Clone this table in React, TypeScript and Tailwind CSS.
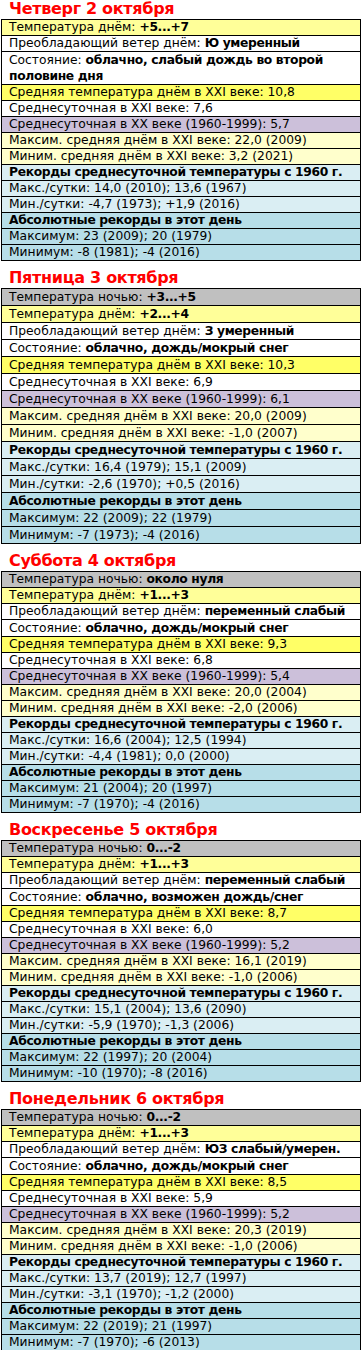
import React from "react";

type Day = {
  title: string;
  tall?: boolean;
  night?: string;
  day: string;
  wind: string;
  state: string;
  avg21: string;
  daily21: string;
  daily20: string;
  max: string;
  min: string;
  recMax: string;
  recMin: string;
  absMax: string;
  absMin: string;
};

const days: Day[] = [
  {
    title: "Четверг 2 октября",
    day: "+5...+7",
    wind: "Ю умеренный",
    state: "облачно, слабый дождь во второй половине дня",
    avg21: "10,8",
    daily21: "7,6",
    daily20: "5,7",
    max: "22,0 (2009)",
    min: "3,2 (2021)",
    recMax: "14,0 (2010); 13,6 (1967)",
    recMin: "-4,7 (1973); +1,9 (2016)",
    absMax: "23 (2009); 20 (1979)",
    absMin: "-8 (1981); -4 (2016)",
  },
  {
    title: "Пятница 3 октября",
    tall: true,
    night: "+3...+5",
    day: "+2...+4",
    wind: "З умеренный",
    state: "облачно, дождь/мокрый снег",
    avg21: "10,3",
    daily21: "6,9",
    daily20: "6,1",
    max: "20,0 (2009)",
    min: "-1,0 (2007)",
    recMax: "16,4 (1979); 15,1 (2009)",
    recMin: "-2,6 (1970); +0,5 (2016)",
    absMax: "22 (2009); 22 (1979)",
    absMin: "-7 (1973); -4 (2016)",
  },
  {
    title: "Суббота 4 октября",
    night: "около нуля",
    day: "+1...+3",
    wind: "переменный слабый",
    state: "облачно, дождь/мокрый снег",
    avg21: "9,3",
    daily21: "6,8",
    daily20: "5,4",
    max: "20,0 (2004)",
    min: "-2,0 (2006)",
    recMax: "16,6 (2004); 12,5 (1994)",
    recMin: "-4,4 (1981); 0,0 (2000)",
    absMax: "21 (2004); 20 (1997)",
    absMin: "-7 (1970); -4 (2016)",
  },
  {
    title: "Воскресенье 5 октября",
    night: "0...-2",
    day: "+1...+3",
    wind: "переменный слабый",
    state: "облачно, возможен дождь/снег",
    avg21: "8,7",
    daily21: "6,0",
    daily20: "5,2",
    max: "16,1 (2019)",
    min: "-1,0 (2006)",
    recMax: "15,1 (2004); 13,6 (2090)",
    recMin: "-5,9 (1970); -1,3 (2006)",
    absMax: "22 (1997); 20 (2004)",
    absMin: "-10 (1970); -8 (2016)",
  },
  {
    title: "Понедельник 6 октября",
    night: "0...-2",
    day: "+1...+3",
    wind: "ЮЗ слабый/умерен.",
    state: "облачно, дождь/мокрый снег",
    avg21: "8,5",
    daily21: "5,9",
    daily20: "5,2",
    max: "20,3 (2019)",
    min: "-1,0 (2006)",
    recMax: "13,7 (2019); 12,7 (1997)",
    recMin: "-3,1 (1970); -1,2 (2000)",
    absMax: "22 (2019); 21 (1997)",
    absMin: "-7 (1970); -6 (2013)",
  },
];

function Row({
  bg,
  tall,
  children,
}: {
  bg: string;
  tall?: boolean;
  children: React.ReactNode;
}) {
  return (
    <div
      className={`border-t border-black first:border-t-0 pl-[7px] pr-1 ${
        tall ? "leading-[16px]" : "leading-[15px]"
      } ${bg}`}
    >
      {children}
    </div>
  );
}

// bold parts run a touch tighter, like the original page
function B({ children }: { children: React.ReactNode }) {
  return <b className="tracking-[-0.35px]">{children}</b>;
}

function DayTable({ d }: { d: Day }) {
  const t = d.tall;
  return (
    <div className="mb-[8px]">
      <h2 className="pl-[9px] h-[19px] text-[16px] leading-[17px] font-bold tracking-[-0.3px] text-[#ff0000]">
        {d.title}
      </h2>
      <div className="ml-px w-[360px] border border-black text-[12.3px] text-black">
        {d.night && (
          <Row bg="bg-[#c0c0c0]" tall={t}>
            Температура ночью: <B>{d.night}</B>
          </Row>
        )}
        <Row bg="bg-[#ffff99]" tall={t}>
          Температура днём: <B>{d.day}</B>
        </Row>
        <Row bg="bg-white" tall={t}>
          Преобладающий ветер днём: <B>{d.wind}</B>
        </Row>
        <Row bg="bg-white" tall>
          Состояние: <B>{d.state}</B>
        </Row>
        <Row bg="bg-[#ffff66]" tall={t}>
          Средняя температура днём в XXI веке: {d.avg21}
        </Row>
        <Row bg="bg-white" tall={t}>
          Среднесуточная в XXI веке: {d.daily21}
        </Row>
        <Row bg="bg-[#ccc0da]" tall={t}>
          Среднесуточная в XX веке (1960-1999): {d.daily20}
        </Row>
        <Row bg="bg-[#ffffcc]" tall={t}>
          Максим. средняя днём в XXI веке: {d.max}
        </Row>
        <Row bg="bg-[#ffffcc]" tall={t}>
          Миним. средняя днём в XXI веке: {d.min}
        </Row>
        <Row bg="bg-[#daeef3]" tall={t}>
          <B>Рекорды среднесуточной температуры с 1960 г.</B>
        </Row>
        <Row bg="bg-[#daeef3]" tall={t}>
          Макс./сутки: {d.recMax}
        </Row>
        <Row bg="bg-[#daeef3]" tall={t}>
          Мин./сутки: {d.recMin}
        </Row>
        <Row bg="bg-[#b7dee8]" tall={t}>
          <B>Абсолютные рекорды в этот день</B>
        </Row>
        <Row bg="bg-[#b7dee8]" tall={t}>
          Максимум: {d.absMax}
        </Row>
        <Row bg="bg-[#b7dee8]" tall={t}>
          Минимум: {d.absMin}
        </Row>
      </div>
    </div>
  );
}

export default function App() {
  return (
    <div className="w-[362px] bg-white font-['DejaVu_Sans',sans-serif]">
      {days.map((d) => (
        <DayTable key={d.title} d={d} />
      ))}
    </div>
  );
}
